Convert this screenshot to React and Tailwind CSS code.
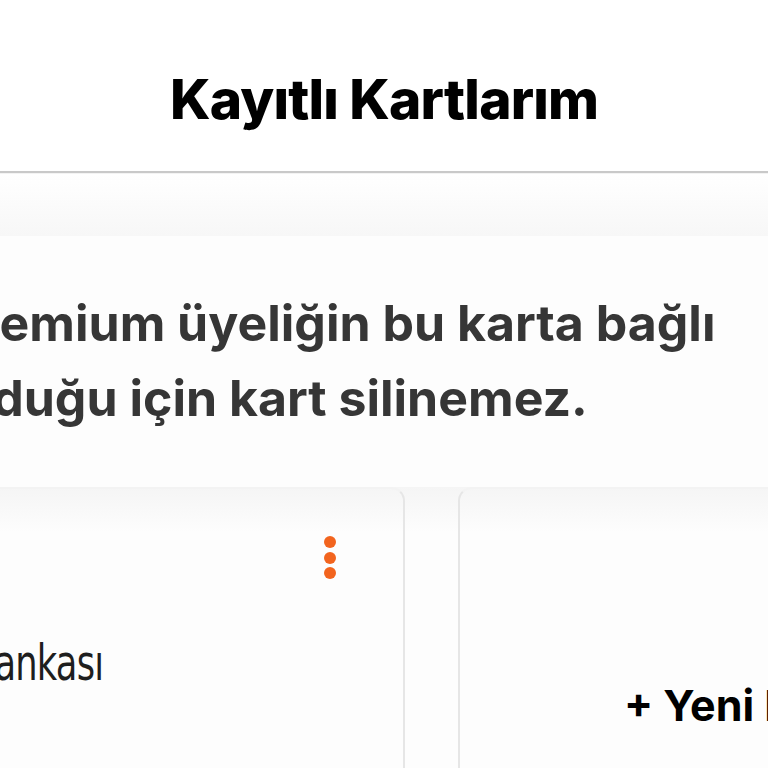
export default function App() {
  return (
    <div className="w-[768px] h-[768px] overflow-hidden bg-[#fdfdfd] font-['Inter',sans-serif]">
      <header className="h-[173px] bg-white flex items-center justify-center border-b-2 border-[#c9c9c9]">
        <h1 className="text-[55px] leading-none font-extrabold text-black tracking-[-0.015em] mt-[28px]">Kayıtlı Kartlarım</h1>
      </header>
      <div className="h-[63px] border-t border-[#f3f3f3] bg-gradient-to-b from-white to-[#f7f7f7]" />
      <section className="pt-[50px] ml-[-52px] w-[900px]">
        <p className="text-[50px] leading-[75px] font-bold text-[#363636] whitespace-nowrap">
          Premium üyeliğin bu karta bağlı
          <br />
          olduğu için kart silinemez.
        </p>
      </section>
      <div className="mt-[51px] h-[300px] flex gap-[53px] bg-gradient-to-b from-[#f5f5f5] to-[#fdfdfd] to-[45px] bg-no-repeat">
        <div className="shrink-0 w-[460px] ml-[-55px] rounded-t-[14px] border-2 border-b-0 border-[#e6e6e6] border-t-[#f3f3f3] flex flex-col pt-[47px]">
          <div className="flex justify-end pr-[67px]">
            <div className="flex flex-col gap-[3.5px]">
              <span className="block w-[12px] h-[12px] rounded-full bg-[#f2641e]" />
              <span className="block w-[12px] h-[12px] rounded-full bg-[#f2641e]" />
              <span className="block w-[12px] h-[12px] rounded-full bg-[#f2641e]" />
            </div>
          </div>
          <div className="flex justify-end w-[156px] mt-[60px]">
            <span className="whitespace-nowrap text-[49px] leading-none text-[#1e1e1e] font-['DejaVu_Sans_Condensed',sans-serif] tracking-[-0.02em] scale-x-[0.8] origin-right">
              İş Bankası
            </span>
          </div>
        </div>
        <div className="shrink-0 w-[420px] rounded-t-[14px] border-2 border-b-0 border-[#e6e6e6] border-t-[#f3f3f3] pt-[195px] pl-[164px]">
          <span className="whitespace-nowrap text-[43px] leading-none font-bold text-black">+ Yeni Kart Ekle</span>
        </div>
      </div>
    </div>
  );
}
